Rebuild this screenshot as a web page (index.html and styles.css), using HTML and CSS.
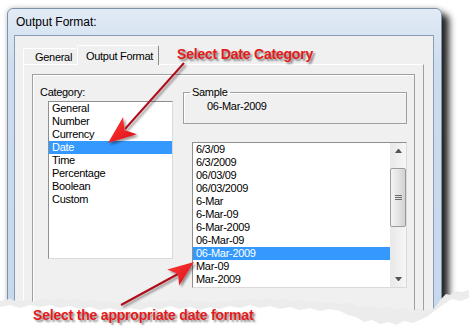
FILE: index.html
```html
<!DOCTYPE html>
<html>
<head>
<meta charset="utf-8">
<title>Output Format</title>
<link rel="stylesheet" href="styles.css">
</head>
<body>
<div class="page">
	<div class="paper">
		<div class="torn">
			<div class="window">
				<div class="title">Output Format:</div>
				<div class="client">
					<div class="tabs">
						<div class="tab">General</div>
						<div class="tab active">Output Format</div>
					</div>
					<div class="panel">
						<div class="frame">
							<div class="cat-col">
								<div class="label">Category:</div>
								<div class="listbox cat-list">
									<div class="item">General</div>
									<div class="item">Number</div>
									<div class="item">Currency</div>
									<div class="item selected">Date</div>
									<div class="item">Time</div>
									<div class="item">Percentage</div>
									<div class="item">Boolean</div>
									<div class="item">Custom</div>
								</div>
							</div>
							<div class="fmt-col">
								<fieldset class="sample">
									<legend>Sample</legend>
									<div class="sample-value">06-Mar-2009</div>
								</fieldset>
								<div class="listbox fmt-list">
									<div class="rows">
										<div class="item">6/3/09</div>
										<div class="item">6/3/2009</div>
										<div class="item">06/03/09</div>
										<div class="item">06/03/2009</div>
										<div class="item">6-Mar</div>
										<div class="item">6-Mar-09</div>
										<div class="item">6-Mar-2009</div>
										<div class="item">06-Mar-09</div>
										<div class="item selected">06-Mar-2009</div>
										<div class="item">Mar-09</div>
										<div class="item">Mar-2009</div>
									</div>
									<div class="scrollbar">
										<div class="sb-btn"><span class="arrow up"></span></div>
										<div class="sb-track">
											<div class="thumb"><span class="grip"></span></div>
										</div>
										<div class="sb-btn"><span class="arrow down"></span></div>
									</div>
								</div>
							</div>
						</div>
					</div>
				</div>
			</div>
		</div>
	</div>

	<svg class="arrows" width="469" height="329" viewBox="0 0 469 329">
		<defs>
			<filter id="shade" x="-20%" y="-20%" width="140%" height="140%">
				<feDropShadow dx="2" dy="2" stdDeviation="1.2" flood-color="#000" flood-opacity="0.4"/>
			</filter>
			<linearGradient id="head" x1="0" y1="0" x2="1" y2="1">
				<stop offset="0" stop-color="#ff3b3b"/>
				<stop offset="1" stop-color="#d80f14"/>
			</linearGradient>
		</defs>
		<g filter="url(#shade)">
			<path d="M184 63 L125 129" stroke="#b0101a" stroke-width="2" fill="none"/>
			<polygon points="108,143 136.8,134.2 124.4,129.9 123.1,117" fill="url(#head)"/>
			<path d="M121 305 L178 274" stroke="#b0101a" stroke-width="2" fill="none"/>
			<polygon points="194,262 179.2,285.6 178,274 167.2,269.6" fill="url(#head)"/>
		</g>
	</svg>

	<div class="note note-top">Select Date Category</div>
	<div class="note note-bottom">Select the appropriate date format</div>
</div>
</body>
</html>
```

FILE: styles.css
```css
body {
	margin: 0;
	background: #fff;
	font-family: "Liberation Sans", Arial, sans-serif;
	color: #000;
}

.page {
	position: relative;
	width: 469px;
	height: 329px;
	overflow: hidden;
}

/* torn screenshot edge: light shade under a jagged white cut */
.paper {
	height: 329px;
	background: #ececec;
	clip-path: polygon(0 0, 469px 0, 469px 298px, 460px 301px, 452px 299px, 444px 304px, 436px 310px, 428px 316px, 420px 320px, 412px 323px, 404px 321px, 396px 325px, 388px 322px, 380px 324px, 372px 320px, 364px 322px, 356px 317px, 348px 315px, 340px 311px, 330px 309px, 320px 311px, 310px 308px, 300px 310px, 290px 307px, 280px 309px, 270px 306px, 260px 308px, 250px 305px, 240px 308px, 230px 306px, 220px 309px, 210px 307px, 200px 310px, 190px 307px, 180px 309px, 170px 306px, 160px 309px, 150px 307px, 140px 310px, 130px 308px, 120px 311px, 110px 308px, 100px 310px, 90px 307px, 80px 309px, 70px 306px, 60px 308px, 50px 305px, 40px 307px, 30px 305px, 20px 308px, 10px 305px, 0 307px);
}

.torn {
	height: 329px;
	background: #fff;
	overflow: hidden;
	clip-path: polygon(0 0, 469px 0, 469px 290px, 462px 292px, 456px 291px, 450px 295px, 446px 294px, 441px 299px, 437px 305px, 433px 309px, 426px 311px, 418px 309px, 410px 311px, 402px 308px, 394px 310px, 386px 307px, 378px 309px, 370px 306px, 362px 308px, 354px 305px, 346px 303px, 338px 305px, 330px 302px, 322px 304px, 314px 301px, 306px 303px, 298px 300px, 290px 302px, 282px 299px, 274px 301px, 266px 298px, 258px 301px, 250px 299px, 242px 302px, 234px 300px, 226px 303px, 218px 301px, 210px 304px, 202px 301px, 194px 303px, 186px 300px, 178px 302px, 170px 300px, 162px 303px, 154px 301px, 146px 304px, 138px 302px, 130px 305px, 122px 302px, 114px 304px, 106px 301px, 98px 303px, 90px 300px, 82px 302px, 74px 299px, 66px 301px, 58px 298px, 50px 301px, 42px 299px, 34px 302px, 26px 300px, 18px 302px, 10px 299px, 0 301px);
}

/* window frame */
.window {
	box-sizing: border-box;
	width: 435px;
	height: 330px;
	margin: 8px 0 0 7px;
	padding: 0 7px 0 6px;
	display: flex;
	flex-direction: column;
	border: 1px solid #7d91a8;
	border-radius: 6px 6px 0 0;
	background: linear-gradient(#e2ebf6, #cddcee 60px, #c6d8ed);
	box-shadow: 7px 6px 7px rgba(0, 0, 0, 0.85), 0 0 5px rgba(0, 0, 0, 0.25);
}

.title {
	height: 26px;
	line-height: 26px;
	padding-left: 2px;
	font-size: 12px;
}

.client {
	flex: 1;
	display: flex;
	flex-direction: column;
	padding: 9px 9px 0 8px;
	background: #f0f0f0;
	border: 1px solid #8a9db4;
	border-bottom: none;
	font-size: 11px;
	letter-spacing: -0.3px;
}

/* tabs */
.tabs {
	display: flex;
	align-items: flex-end;
	height: 20px;
	margin-bottom: -1px;
	position: relative;
	z-index: 1;
}

.tab {
	box-sizing: border-box;
	width: 54px;
	height: 16px;
	margin-bottom: 1px;
	padding: 2px 0 0 11px;
	line-height: 13px;
	border: 1px solid;
	border-color: #fff transparent transparent #fff;
	border-bottom: none;
	border-radius: 2px 2px 0 0;
	background: #f0f0f0;
}

.tab.active {
	width: 82px;
	height: 20px;
	margin-bottom: 0;
	padding: 4px 0 0 8px;
	border-color: #fff #8a8a8a transparent #fff;
}

.panel {
	flex: 1;
	display: flex;
	flex-direction: column;
	padding: 9px 8px 0 8px;
	border: 1px solid;
	border-color: #fff #a0a0a0 #a0a0a0 #fff;
	border-bottom: none;
}

.frame {
	flex: 1;
	display: flex;
	align-items: flex-start;
	border: 1px solid #a0a0a0;
	border-bottom: none;
	box-shadow: inset 1px 1px #fff;
}

/* category column */
.cat-col {
	margin: 11px 0 0 7px;
}

.label {
	line-height: 13px;
}

.listbox {
	box-sizing: border-box;
	background: #fff;
	border: 1px solid;
	border-color: #8e8f8f #dadada #dadada #8e8f8f;
}

.cat-list {
	width: 125px;
	height: 158px;
	margin: 2px 0 0 8px;
}

.item {
	height: 13px;
	line-height: 13px;
	padding-left: 3px;
	white-space: nowrap;
}

.item.selected {
	background: #3399ff;
	color: #fff;
}

/* format column */
.fmt-col {
	margin: 11px 0 0 10px;
	width: 224px;
}

.sample {
	margin: 0;
	padding: 0 0 10px 6px;
	border: 1px solid #a0a0a0;
	box-shadow: inset 1px 1px #fff;
}

.sample legend {
	padding: 0 2px;
	line-height: 12px;
}

.sample-value {
	padding: 2px 0 0 17px;
	line-height: 13px;
}

.fmt-list {
	display: flex;
	width: 215px;
	height: 146px;
	margin: 18px 0 0 9px;
}

.rows {
	flex: 1;
	overflow: hidden;
}

.scrollbar {
	width: 16px;
	display: flex;
	flex-direction: column;
	background: linear-gradient(to right, #e8e8e8, #f6f6f6);
}

.sb-btn {
	height: 16px;
	display: flex;
	align-items: center;
	justify-content: center;
}

.arrow {
	width: 1px;
	height: 0;
	border-left: 3px solid transparent;
	border-right: 3px solid transparent;
}

.arrow.up {
	border-bottom: 4px solid #555;
}

.arrow.down {
	border-top: 4px solid #555;
}

.sb-track {
	flex: 1;
	padding-top: 9px;
}

.thumb {
	box-sizing: border-box;
	height: 59px;
	display: flex;
	align-items: center;
	justify-content: center;
	border: 1px solid #9b9b9b;
	border-radius: 2px;
	background: linear-gradient(to right, #f4f4f4, #e4e4e4 50%, #d2d2d2);
}

.grip {
	width: 7px;
	height: 5px;
	background: repeating-linear-gradient(#6a6a6a 0 1px, transparent 1px 2px);
}

/* red annotations */
.arrows {
	position: absolute;
	left: 0;
	top: 0;
	pointer-events: none;
}

.note {
	position: absolute;
	font-size: 14px;
	font-weight: bold;
	line-height: 16px;
	letter-spacing: -0.2px;
	color: #e31b1b;
	text-shadow: 2px 2px 2px rgba(0, 0, 0, 0.45);
	white-space: nowrap;
}

.note-top {
	left: 177px;
	top: 46px;
}

.note-bottom {
	left: 33px;
	top: 307px;
}
```
